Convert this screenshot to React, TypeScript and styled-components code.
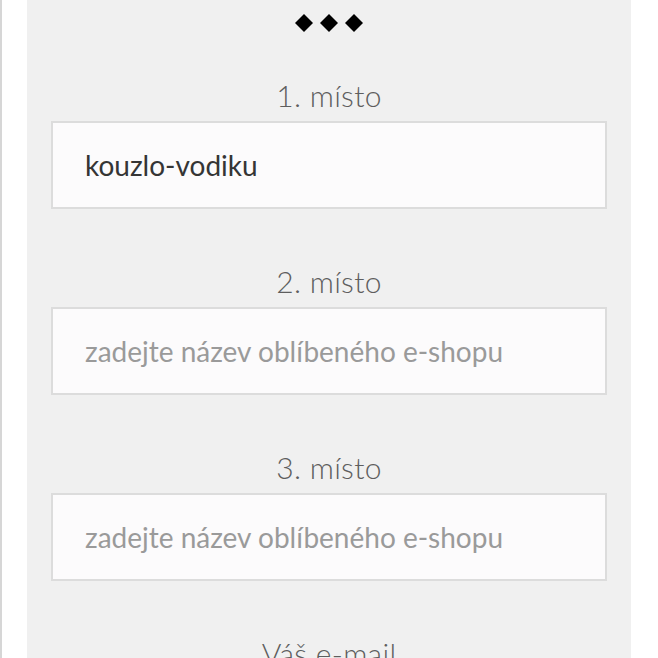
import styled, { createGlobalStyle } from "styled-components";

const GlobalStyle = createGlobalStyle`
  html, body {
    margin: 0;
    padding: 0;
    background: #ffffff;
  }
  body {
    font-family: Lato, "Open Sans", sans-serif;
    overflow: hidden;
  }
`;

const Page = styled.div`
  height: 658px;
  overflow: hidden;
  display: flex;
  border-left: 2px solid #d6d6d6;
  padding-left: 25px;
  padding-right: 27px;
`;

const Panel = styled.main`
  flex: 1;
  background: #f0f0f0;
  display: flex;
  flex-direction: column;
  align-items: center;
  padding: 14px 24px 0;
`;

const Ornament = styled.div`
  display: flex;
  gap: 7px;
  height: 18px;
  align-items: center;
  margin-bottom: 45px;
`;

const Diamond = styled.span`
  width: 18px;
  height: 18px;
  background: #000;
  clip-path: polygon(50% 0, 100% 50%, 50% 100%, 0 50%);
`;

const Field = styled.label`
  width: 100%;
  display: flex;
  flex-direction: column;
  align-items: center;
  margin-bottom: 54px;
`;

const Label = styled.span`
  font-size: 30px;
  font-weight: 300;
  color: #5e5e5e;
  line-height: 36px;
  margin-bottom: 8px;
  letter-spacing: 0.3px;
`;

const Input = styled.input`
  box-sizing: border-box;
  width: 100%;
  height: 88px;
  border: 2px solid #dcdcdc;
  background: #fcfbfc;
  padding: 0 32px;
  font-family: Lato, "Open Sans", sans-serif;
  font-size: 28px;
  color: #353535;
  outline: none;

  &::placeholder {
    color: #9a9a9a;
  }
`;

const fields = [
  { label: "1. místo", value: "kouzlo-vodiku" },
  { label: "2. místo", value: "" },
  { label: "3. místo", value: "" },
];

export default function App() {
  return (
    <>
      <GlobalStyle />
      <Page>
        <Panel>
          <Ornament>
            <Diamond />
            <Diamond />
            <Diamond />
          </Ornament>
          {fields.map((f) => (
            <Field key={f.label}>
              <Label>{f.label}</Label>
              <Input
                defaultValue={f.value}
                placeholder="zadejte název oblíbeného e-shopu"
              />
            </Field>
          ))}
          <Field>
            <Label>Váš e-mail</Label>
          </Field>
        </Panel>
      </Page>
    </>
  );
}
